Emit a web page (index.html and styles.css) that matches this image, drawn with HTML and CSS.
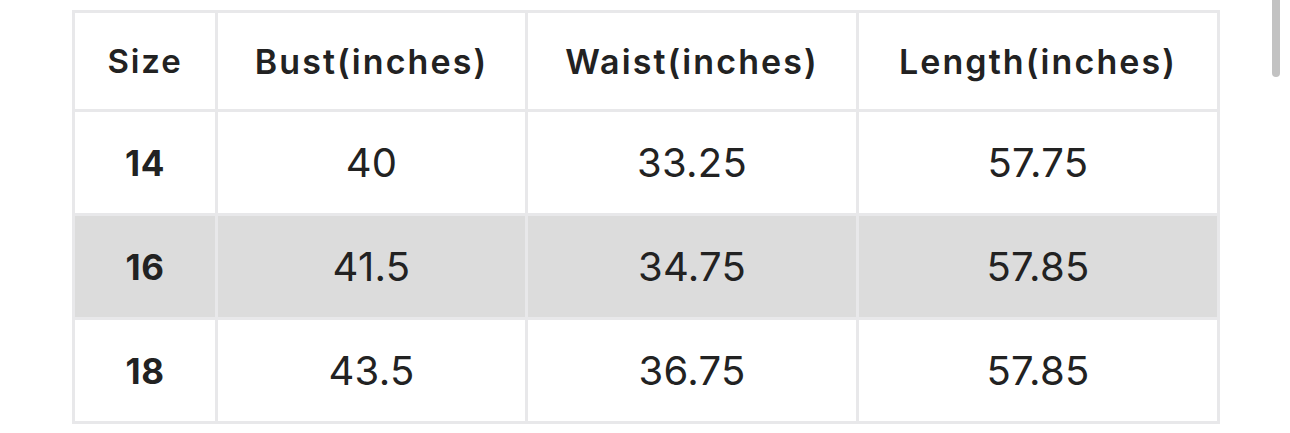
FILE: index.html
```html
<!DOCTYPE html>
<html>
<head>
<meta charset="utf-8">
<link rel="stylesheet" href="styles.css">
</head>
<body>
<div class="page">
  <table class="size-table">
    <colgroup>
      <col class="c1"><col class="c2"><col class="c3"><col class="c4">
    </colgroup>
    <thead>
      <tr class="head-row">
        <th class="size-head">Size</th><th>Bust(inches)</th><th>Waist(inches)</th><th>Length(inches)</th>
      </tr>
    </thead>
    <tbody>
      <tr class="row"><td class="size">14</td><td>40</td><td>33.25</td><td>57.75</td></tr>
      <tr class="row shaded"><td class="size">16</td><td>41.5</td><td>34.75</td><td>57.85</td></tr>
      <tr class="row"><td class="size">18</td><td>43.5</td><td>36.75</td><td>57.85</td></tr>
    </tbody>
  </table>
</div>
<div class="scrollbar"></div>
</body>
</html>
```
FILE: styles.css
```css
html, body {
  margin: 0;
  padding: 0;
  background: #ffffff;
}
.page {
  padding: 10px 0 0 72px;
}
.size-table {
  border-collapse: collapse;
  table-layout: fixed;
  width: 1145px;
  font-family: "Inter", "Open Sans", sans-serif;
  color: #222222;
  border: 3px solid #e8e8ea;
}
.c1 { width: 143px; }
.c2 { width: 310px; }
.c3 { width: 331px; }
.c4 { width: 361px; }
.size-table th,
.size-table td {
  border: 3px solid #e8e8ea;
  text-align: center;
  vertical-align: middle;
  padding: 0;
}
.head-row { height: 99px; }
.size-table th {
  font-size: 34px;
  font-weight: 600;
  letter-spacing: 2.1px;
}
.size-table th.size-head {
  font-size: 33px;
  letter-spacing: 1.8px;
}
.row { height: 104px; }
.size-table td {
  font-size: 40px;
  font-weight: 400;
  letter-spacing: 0.3px;
}
.size-table td.size {
  font-size: 35px;
  font-weight: 700;
  letter-spacing: 0.5px;
}
.shaded td {
  background: #dcdcdc;
}
.scrollbar {
  position: fixed;
  top: 0;
  right: 10px;
  width: 8px;
  height: 77px;
  background: #c2c2c2;
  border-radius: 0 0 4px 4px;
}
```
